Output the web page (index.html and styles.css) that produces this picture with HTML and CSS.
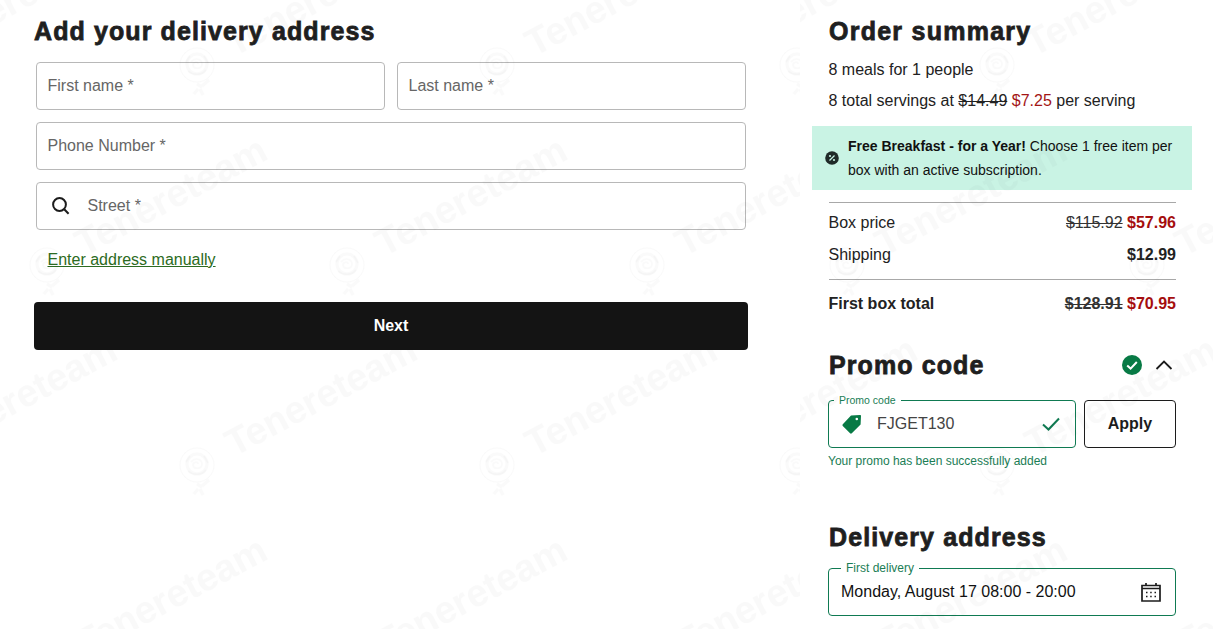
FILE: index.html
```html
<!DOCTYPE html>
<html lang="en">
<head>
<meta charset="utf-8">
<title>Checkout</title>
<link rel="stylesheet" href="styles.css">
</head>
<body>
<main class="page">
  <section class="left">
    <h1 class="title">Add your delivery address</h1>
    <form class="form">
      <div class="pair">
        <div class="input">First name *</div>
        <div class="input">Last name *</div>
      </div>
      <div class="input">Phone Number *</div>
      <div class="input input-search">
        <svg class="search-icon" viewBox="0 0 20 20" width="20" height="20"><circle cx="8.5" cy="8.5" r="6.4"/><path d="M13.2 13.2 L17.6 17.8"/></svg>
        <span>Street *</span>
      </div>
      <a class="manual" href="#">Enter address manually</a>
      <button class="next" type="button">Next</button>
    </form>
    <svg class="wm" width="800" height="629" aria-hidden="true">
      <defs>
        <g id="mark">
          <circle cx="0" cy="0" r="17" class="wm-line"/>
          <circle cx="0" cy="-1" r="10" class="wm-line wm-thick"/>
          <path d="M-6 -3 C-2 -8 5 -6 5 -1 C5 4 -3 5 -4 0 C-4 -3 1 -4 1 -1 M-9 6 C-3 11 5 10 9 5 M-7 -9 L-11 -3 M7 -9 L11 -2" class="wm-line wm-mid"/>
          <path d="M0 19 L5 22 M5 21 L12 15 M1 24 L-3 29 M3 24 L6 30" class="wm-line wm-thick"/>
          <text x="37" y="-8" transform="rotate(-28 37 -8)" class="wm-text">Tenereteam</text>
        </g>
        <pattern id="wm" patternUnits="userSpaceOnUse" width="300" height="400">
          <use href="#mark" x="197" y="65"/>
          <use href="#mark" x="-103" y="65"/>
          <use href="#mark" x="197" y="465"/>
          <use href="#mark" x="-103" y="465"/>
          <use href="#mark" x="47" y="265"/>
        </pattern>
      </defs>
      <rect width="800" height="629" fill="url(#wm)"/>
    </svg>
  </section>

  <aside class="right">
    <h2 class="title title-shift">Order summary</h2>
    <p class="line line-first">8 meals for 1 people</p>
    <p class="line">8 total servings at <s>$14.49</s> <span class="red">$7.25</span> per serving</p>
    <div class="banner">
      <svg class="banner-icon" viewBox="0 0 14 14" width="14" height="14"><circle cx="7" cy="7" r="6.8" class="bi-bg"/><path d="M4.5 9.5 L9.5 4.5" class="bi-fg"/><circle cx="5" cy="5" r="1.1" class="bi-dot"/><circle cx="9" cy="9" r="1.1" class="bi-dot"/></svg>
      <p><b>Free Breakfast - for a Year!</b> Choose 1 free item per box with an active subscription.</p>
    </div>
    <div class="prices">
      <div class="row"><span>Box price</span><span class="amount"><s>$115.92</s> <b class="dark-red">$57.96</b></span></div>
      <div class="row"><span>Shipping</span><b>$12.99</b></div>
      <div class="row row-total"><b>First box total</b><b><s>$128.91</s> <span class="dark-red">$70.95</span></b></div>
    </div>
    <div class="promo-head">
      <h2 class="title">Promo code</h2>
      <div class="promo-icons">
        <svg viewBox="0 0 20 20" width="20" height="20"><circle cx="10" cy="10" r="10" class="ok-bg"/><path d="M5.2 10.4 L8.6 13.6 L14.8 7" class="ok-fg"/></svg>
        <svg viewBox="0 0 18 10" width="18" height="10"><path d="M1.5 9 L9 1.5 L16.5 9" class="chev"/></svg>
      </div>
    </div>
    <div class="promo-row">
      <div class="field field-promo">
        <span class="legend legend-small">Promo code</span>
        <svg class="tag" viewBox="0 0 20 20" width="20" height="20"><path d="M9 1.5 L18 1 C18.6 1 19 1.4 19 2 L18.6 10.5 L9.8 19.3 C9.3 19.8 8.6 19.8 8.1 19.3 L0.8 12 C0.3 11.5 0.3 10.8 0.8 10.3 Z" class="tag-fill"/><circle cx="14.8" cy="5" r="1.3" class="tag-hole"/></svg>
        <span class="code">FJGET130</span>
        <svg class="check" viewBox="0 0 18 14" width="18" height="14"><path d="M1 7.5 L6.5 12.5 L17 1.5" class="check-line"/></svg>
      </div>
      <button class="apply" type="button">Apply</button>
    </div>
    <p class="success">Your promo has been successfully added</p>
    <h2 class="title title-delivery">Delivery address</h2>
    <div class="field field-date">
      <span class="legend">First delivery</span>
      <span class="date">Monday, August 17 08:00 - 20:00</span>
      <svg class="cal" viewBox="0 0 20 20" width="20" height="20"><path d="M1 3.5 H19 V19 H1 Z M1 6.5 H19 M5 1 V3.5 M15 1 V3.5" class="cal-line"/><path d="M5 10.5 H6.5 M9.2 10.5 H10.7 M13.5 10.5 H15 M5 14.5 H6.5 M9.2 14.5 H10.7 M13.5 14.5 H15" class="cal-dots"/></svg>
    </div>
    <svg class="wm" width="413" height="629" aria-hidden="true"><rect width="413" height="629" fill="url(#wm)"/></svg>
  </aside>
</main>
</body>
</html>
```
FILE: styles.css
```css
* { box-sizing: border-box; }
html, body { margin: 0; padding: 0; height: 100%; overflow: hidden; background: #fff; }
body { font-family: "Liberation Sans", Arial, sans-serif; font-size: 16px; color: #222; }
p { margin: 0; }
.page { display: grid; grid-template-columns: 800px 413px; height: 629px; overflow: hidden; }
.left, .right { position: relative; overflow: hidden; }
.left { padding: 16px 52px 0 34px; }
.right { padding: 16px 37px 0 28px; }

.title {
  margin: 0; font-size: 25px; line-height: 30px; font-weight: 700; color: #1f1f1f;
  letter-spacing: 1.1px; -webkit-text-stroke: 0.8px #1f1f1f;
}
.title-shift { margin-left: 1px; letter-spacing: 1.25px; }
.form { display: flex; flex-direction: column; gap: 12px; margin: 16px 0 0; padding: 0 2px; }
.pair { display: grid; grid-template-columns: 349px 349px; gap: 12px; }
.input {
  height: 48px; border: 1px solid #b8b8b8; border-radius: 4px; padding: 0 10.5px;
  display: flex; align-items: center; color: #666; line-height: 44px; background: #fff;
}
.input-search { gap: 16.5px; padding-left: 14px; }
.search-icon { fill: none; stroke: #1c1c1c; stroke-width: 2; }
.manual { color: #2c6b22; margin: 9px 0 0 11.5px; line-height: 18px; text-decoration: underline; }
.next {
  margin: 21px -2px 0; height: 48px; width: 714px; border: 0; border-radius: 4px; background: #141414;
  color: #fff; font: 700 16px "Liberation Sans", Arial, sans-serif;
}

.line { line-height: 24px; margin-left: 0.5px; }
.line-first { margin-top: 12px; }
.line + .line { margin-top: 7px; }
.red { color: #a31515; }
.dark-red { color: #a50e0e; }
.banner {
  margin: 13px -16px 0 -16px; height: 64px; background: #c9f3e4; color: #111;
  display: flex; align-items: center; gap: 9px; padding: 0 16px 0 13px; font-size: 14px; line-height: 24px;
}
.banner-icon { flex: none; }
.bi-bg { fill: #1f2a28; }
.bi-fg { stroke: #c9f3e4; stroke-width: 1.2; fill: none; }
.bi-dot { fill: #c9f3e4; }
.prices { margin: 12px 0 0; padding-left: 0.5px; }
.row { display: flex; justify-content: space-between; align-items: center; height: 32px; }
.row:first-child { border-top: 1px solid #a8a8a8; height: 40px; padding-top: 1px; }
.row:nth-child(2) { height: 38px; padding-bottom: 12px; border-bottom: 1px solid #a8a8a8; }
.row-total { height: 48px; }
.row s { color: #333; }

.promo-head { display: flex; justify-content: space-between; align-items: center; margin-top: 22px; padding-left: 1px; padding-right: 3px; }
.promo-icons { display: flex; align-items: center; gap: 13px; }
.ok-bg { fill: #087a45; }
.ok-fg { fill: none; stroke: #fff; stroke-width: 2; }
.chev { fill: none; stroke: #1c1c1c; stroke-width: 1.8; }

.promo-row { display: grid; grid-template-columns: 248px 92px; gap: 8px; margin-top: 20px; }
.field { position: relative; height: 48px; border: 1px solid #0f7a52; border-radius: 4px; display: flex; align-items: center; }
.field-promo { padding: 0 15px 0 13px; }
.legend { position: absolute; top: -8px; left: 12px; background: #fff; padding: 0 5px; font-size: 12px; line-height: 14px; color: #1a7d55; }
.legend-small { left: 5px; padding: 0 5px; font-size: 10.5px; }
.tag { flex: none; }
.tag-fill { fill: #087a45; }
.tag-hole { fill: #fff; }
.code { flex: 1; margin-left: 15px; color: #444; }
.check-line { fill: none; stroke: #0f7a52; stroke-width: 2; }
.apply { height: 48px; background: #fff; border: 1px solid #1c1c1c; border-radius: 4px; color: #1c1c1c; font: 700 16px "Liberation Sans", Arial, sans-serif; }
.success { font-size: 12px; line-height: 14px; color: #1a7d55; margin-top: 6px; }
.title-delivery { margin: 54px 0 0 1px; }
.field-date { margin-top: 16px; padding: 0 14px 0 12px; width: 348px; justify-content: space-between; border-color: #0f7a52; }
.date { color: #111; }
.cal-line { fill: none; stroke: #1c1c1c; stroke-width: 1.7; }
.cal-dots { fill: none; stroke: #1c1c1c; stroke-width: 1.7; }

.wm { position: absolute; top: 0; left: 0; pointer-events: none; }
.wm-text { font: 700 38px "Liberation Sans", Arial, sans-serif; fill: rgba(0,0,0,.025); }
.wm-line { fill: none; stroke: rgba(0,0,0,.02); stroke-width: 1; }
.wm-mid { stroke-width: 1.5; }
.wm-thick { stroke-width: 3; }
```
